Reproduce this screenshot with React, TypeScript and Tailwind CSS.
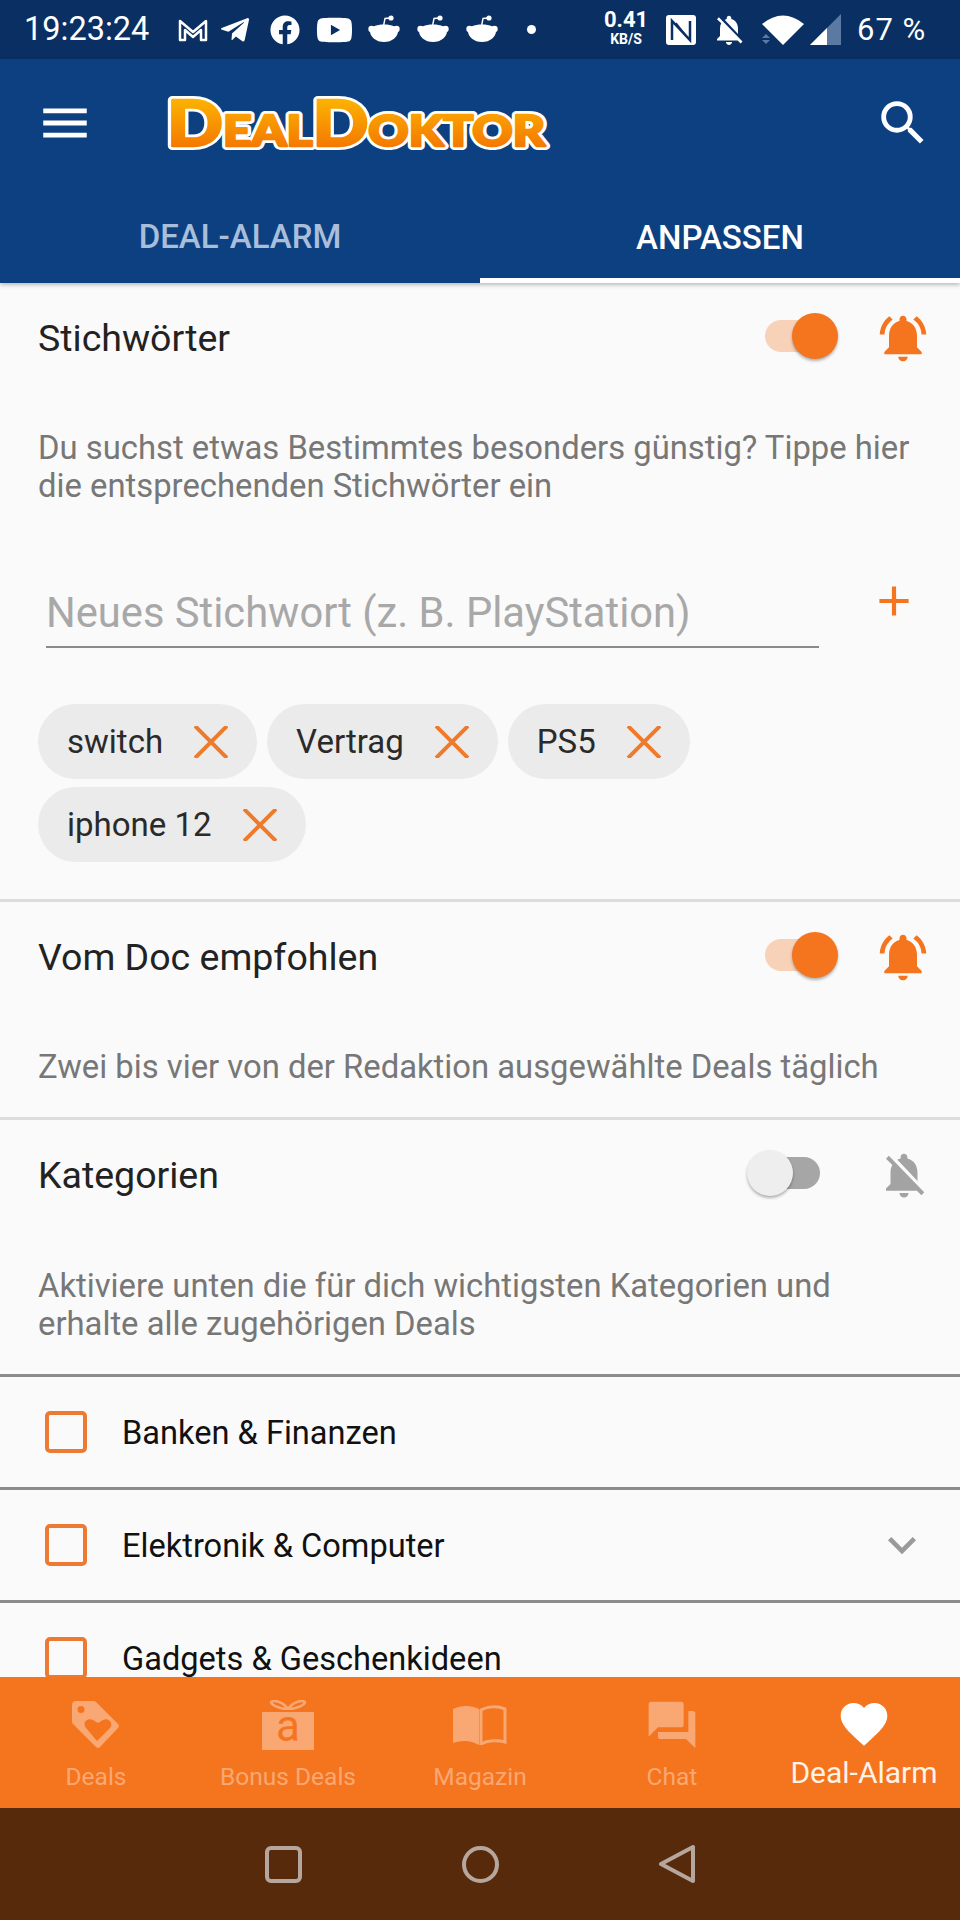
import React from 'react';
import { MdAdd, MdFavorite, MdKeyboardArrowDown, MdMenu, MdNotificationsActive, MdNotificationsOff, MdQuestionAnswer, MdSearch } from 'react-icons/md';
import { FaFacebook, FaTelegramPlane, FaYoutube } from 'react-icons/fa';

const Reddit = () => (
  <svg viewBox="0 0 32 32" className="w-[32px] h-[32px] text-white" fill="currentColor">
    <circle cx="23" cy="4" r="2.6" />
    <path d="M15.5 12 L17 4.5 L22 4" fill="none" stroke="currentColor" strokeWidth="1.4" />
    <circle cx="3.5" cy="15" r="3.2" />
    <circle cx="28.5" cy="15" r="3.2" />
    <path d="M2 17c0-4 6-6.500 14-6.500s14 2.500 14 6.500c0 6-6 11-14 11S2 23 2 17z" />
  </svg>
);

const Toggle = ({ on }: { on: boolean }) => (
  <div className={on ? 'relative w-[72px] h-[32px] rounded-full bg-[#f8d2b8]' : 'relative w-[72px] h-[32px] rounded-full bg-[#a6a6a6]'}>
    <div
      className={
        on
          ? 'absolute right-[-1px] top-[-7px] w-[46px] h-[46px] rounded-full bg-[#f5741e] shadow-[0_2px_3px_rgba(0,0,0,0.3)]'
          : 'absolute left-[-1px] top-[-7px] w-[46px] h-[46px] rounded-full bg-[#eeeeee] shadow-[0_2px_3px_rgba(0,0,0,0.3)]'
      }
    />
  </div>
);

const SectionHead = ({ title, on }: { title: string; on: boolean }) => (
  <div className="flex items-center h-[110px] pl-[38px] pr-[29px]">
    <span className="flex-1 text-[37.5px] text-[#222222]">{title}</span>
    {on ? (
      <div className="flex items-center gap-[38px]">
        <div className="mt-[-4px]"><Toggle on /></div>
        <MdNotificationsActive className="w-[56px] h-[56px] text-[#f5741e]" />
      </div>
    ) : (
      <div className="flex items-center gap-[57px]">
        <div className="mt-[-4px]"><Toggle on={false} /></div>
        <MdNotificationsOff className="w-[54px] h-[54px] text-[#a3a3a3]" />
      </div>
    )}
  </div>
);

const Desc = ({ children }: { children: React.ReactNode }) => (
  <p className="pl-[38px] pr-[30px] text-[32.8px] leading-[38px] text-[#777777]">{children}</p>
);

const Chip = ({ label }: { label: string }) => (
  <div className="flex items-center h-[75px] rounded-[38px] bg-[#ebebeb] pl-[29px] pr-[29px]">
    <span className="text-[33px] text-[#2a2a2a]">{label}</span>
    <svg viewBox="0 0 34 32" className="w-[34px] h-[32px] ml-[31px]" fill="none" stroke="#ee7a2c" strokeWidth="4">
      <path d="M1 0 L33 32 M33 0 L1 32" />
    </svg>
  </div>
);

const Divider = () => <div className="h-[3px] bg-[#dcdcdc]" />;

const CatRow = ({ label, arrow }: { label: string; arrow?: boolean }) => (
  <div className="flex items-center h-[113px] pl-[45px] pr-[30px] border-t-[3px] border-[#8c8c8c]">
    <div className="w-[42px] h-[42px] rounded-[5px] border-[4px] border-[#ec7a33]" />
    <span className="flex-1 ml-[35px] pt-[3px] text-[32.6px] text-[#111111]">{label}</span>
    {arrow && <MdKeyboardArrowDown className="w-[56px] h-[56px] text-[#9a9a9a]" />}
  </div>
);

const NavItem = ({ icon, label }: { icon: React.ReactNode; label: string }) => (
  <div className="flex-1 flex flex-col items-center">
    <div className="h-[58px] flex items-center justify-center text-[#f9a873]">{icon}</div>
    <span className="mt-[7px] text-[24.5px] leading-[32px] text-[#f9a873]">{label}</span>
  </div>
);

export default function App() {
  return (
    <div className="w-[960px] h-[1920px] flex flex-col overflow-hidden bg-[#fafafa] font-['Roboto',sans-serif]">
      {/* status bar */}
      <div className="h-[59px] shrink-0 flex items-center bg-[#0a2f63] text-white pl-[24px]">
        <span className="text-[32.5px] w-[154px] leading-none">19:23:24</span>
        <svg viewBox="0 0 30 24" className="w-[30px] h-[24px]" fill="none" stroke="white" strokeWidth="2.5">
          <path d="M2 22V3l13 11L28 3v19h-5V12l-8 7-8-7v10z" strokeLinejoin="round" />
        </svg>
        <FaTelegramPlane className="w-[34px] h-[32px] ml-[10px]" />
        <FaFacebook className="w-[30px] h-[30px] ml-[18px]" />
        <FaYoutube className="w-[37px] h-[34px] ml-[16px]" />
        <div className="ml-[15px]"><Reddit /></div>
        <div className="ml-[17px]"><Reddit /></div>
        <div className="ml-[17px]"><Reddit /></div>
        <div className="w-[9px] h-[9px] rounded-full bg-white ml-[29px]" />
        <div className="ml-[68px] mt-[-5px] w-[44px] flex flex-col items-center font-bold">
          <span className="text-[22px] leading-[24px]">0.41</span>
          <span className="text-[14px] leading-[14px]">KB/S</span>
        </div>
        <svg viewBox="0 0 30 30" className="w-[30px] h-[30px] ml-[18px]">
          <rect width="30" height="30" rx="3" fill="white" />
          <path d="M6 25V6l18 19V6" fill="none" stroke="#0a2f63" strokeWidth="2.500" />
          <path d="M10 8l11 14" fill="none" stroke="#0a2f63" strokeWidth="1.500" />
        </svg>
        <MdNotificationsOff className="w-[36px] h-[36px] ml-[15px]" />
        <svg viewBox="0 0 42 30" className="w-[42px] h-[30px] ml-[15px]">
          <path d="M0 9 Q21 -8 42 9 L21 30z" fill="white" />
          <path d="M0 23l4-4 4 4zM0 25l4 4 4-4z" fill="#5a7aa3" />
        </svg>
        <svg viewBox="0 0 31 31" className="w-[31px] h-[31px] ml-[6px]">
          <path d="M31 0V31H0z" fill="#5a7aa3" />
          <path d="M17 14V31H0z" fill="white" />
        </svg>
        <span className="text-[31px] leading-none ml-[16px] tracking-[1px]">67 %</span>
      </div>

      {/* app bar */}
      <div className="h-[224px] shrink-0 flex flex-col bg-[#0d4080] shadow-[0_2px_4px_rgba(0,0,0,0.25)] z-10">
        <div className="h-[148px] flex items-start">
          <MdMenu className="w-[58px] h-[58px] ml-[36px] mt-[35px] text-white" />
          <svg viewBox="0 0 396 68" className="w-[396px] h-[68px] ml-[68px] mt-[33px]">
            <defs>
              <linearGradient id="logoFill" x1="0" y1="0" x2="0" y2="1">
                <stop offset="0" stopColor="#ffc400" />
                <stop offset="1" stopColor="#f26a00" />
              </linearGradient>
              <text
                id="logoText"
                x="5"
                y="54"
                textLength="378"
                lengthAdjust="spacingAndGlyphs"
                strokeLinejoin="round"
                fontFamily="Lato, 'Open Sans', sans-serif"
                fontWeight="900"
                fontSize="42"
              >
                <tspan fontSize="62">D</tspan>EAL<tspan fontSize="62">D</tspan>OKTOR
              </text>
            </defs>
            <use href="#logoText" fill="white" stroke="white" strokeWidth="8" />
            <use href="#logoText" fill="url(#logoFill)" stroke="url(#logoFill)" strokeWidth="2.5" />
          </svg>
          <MdSearch className="w-[58px] h-[58px] ml-[316px] mt-[35px] text-white" />
        </div>
        <div className="flex-1 flex">
          <div className="flex-1 flex items-center justify-center pb-[16px] text-[33px] font-medium text-[#a9bedb]">DEAL-ALARM</div>
          <div className="flex-1 flex items-center justify-center pb-[9px] text-[33px] font-medium text-white border-b-[5px] border-white">ANPASSEN</div>
        </div>
      </div>

      {/* content */}
      <div className="flex-1 overflow-hidden">
        <SectionHead title="Stichwörter" on />
        <div className="pt-[36px]">
          <Desc>
            Du suchst etwas Bestimmtes besonders günstig? Tippe hier
            <br />
            die entsprechenden Stichwörter ein
          </Desc>
        </div>
        <div className="flex items-start mt-[64px] pl-[46px]">
          <div className="w-[773px] h-[79px] flex items-center pt-[12px] border-b-2 border-[#8a8a8a] text-[41.7px] text-[#a8a8a8]">
            Neues Stichwort (z. B. PlayStation)
          </div>
          <MdAdd className="w-[50px] h-[50px] ml-[50px] mt-[7px] text-[#f5741e]" />
        </div>
        <div className="flex flex-wrap gap-x-[10px] gap-y-[8px] w-[760px] ml-[38px] mt-[56px] mb-[37px]">
          <Chip label="switch" />
          <Chip label="Vertrag" />
          <Chip label="PS5" />
          <Chip label="iphone 12" />
        </div>
        <Divider />
        <SectionHead title="Vom Doc empfohlen" on />
        <div className="pt-[36px] pb-[31px]">
          <Desc>Zwei bis vier von der Redaktion ausgewählte Deals täglich</Desc>
        </div>
        <Divider />
        <SectionHead title="Kategorien" on={false} />
        <div className="pt-[37px] pb-[31px]">
          <Desc>
            Aktiviere unten die für dich wichtigsten Kategorien und
            <br />
            erhalte alle zugehörigen Deals
          </Desc>
        </div>
        <CatRow label="Banken & Finanzen" />
        <CatRow label="Elektronik & Computer" arrow />
        <CatRow label="Gadgets & Geschenkideen" />
      </div>

      {/* bottom nav */}
      <div className="h-[131px] shrink-0 flex pt-[19px] bg-[#f5741e]">
        <NavItem
          label="Deals"
          icon={
            <svg viewBox="0 0 48 48" className="w-[48px] h-[48px]" fill="currentColor">
              <path fillRule="evenodd" d="M4 0h17a4 4 0 0 1 3 1l22 22a3 3 0 0 1 0 4L28 46a3 3 0 0 1-4 0L2 24a4 4 0 0 1-2-3V4a4 4 0 0 1 4-4zM9 5a3.500 3.500 0 1 0 0 7 3.500 3.500 0 0 0 0-7zM25 40l13-13c4-5-2-11-7-8l-5 3-5-3c-6-3-11 3-7 8z" />
            </svg>
          }
        />
        <NavItem
          label="Bonus Deals"
          icon={
            <div className="flex flex-col items-center">
              <svg viewBox="0 0 36 10" className="w-[36px] h-[10px]" fill="none" stroke="currentColor" strokeWidth="2.500">
                <path d="M18 9C12 1 4 0 1 2c0 3 9 7 17 7 8 0 17-4 17-7-3-2-11-1-17 7z" />
              </svg>
              <div className="w-[52px] h-[38px] mt-[2px] flex items-center justify-center bg-[#f9a873] text-[#f5741e] text-[44px] leading-none pb-[10px]">a</div>
            </div>
          }
        />
        <NavItem
          label="Magazin"
          icon={
            <svg viewBox="0 0 54 40" className="w-[54px] h-[40px]" fill="none">
              <path d="M0 4C8 0 18 0 26 4V40C18 35 8 35 0 38z" fill="currentColor" />
              <path d="M28 5C35 1 45 1 52 4V37C45 35 35 35 28 39z" stroke="currentColor" strokeWidth="3" />
            </svg>
          }
        />
        <NavItem label="Chat" icon={<MdQuestionAnswer className="w-[56px] h-[56px]" />} />
        <div className="flex-1 flex flex-col items-center">
          <MdFavorite className="w-[56px] h-[56px] text-white" />
          <span className="mt-[3px] text-[30px] leading-[36px] text-[#fff3e8]">Deal-Alarm</span>
        </div>
      </div>

      {/* android nav */}
      <div className="h-[112px] shrink-0 flex items-center justify-center gap-[160px] bg-[#582a0c]">
        <div className="w-[37px] h-[37px] rounded-[6px] border-[4px] border-[#b5a79e]" />
        <div className="w-[37px] h-[37px] rounded-full border-[4px] border-[#b5a79e]" />
        <svg viewBox="0 0 37 38" className="w-[37px] h-[38px]" fill="none" stroke="#b5a79e" strokeWidth="4" strokeLinejoin="round">
          <path d="M2 19 L34 2 V36z" />
        </svg>
      </div>
    </div>
  );
}
